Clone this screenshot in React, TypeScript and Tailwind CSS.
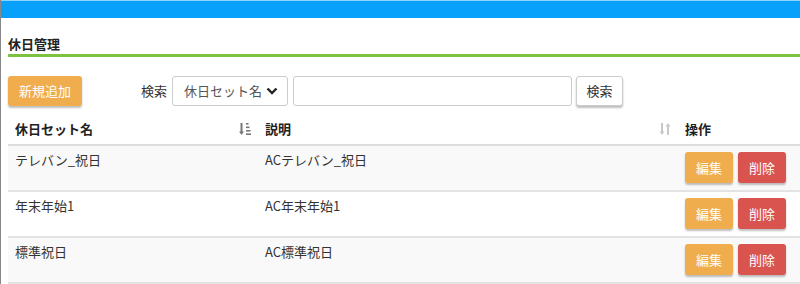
import React from "react";

const rows = [
  { name: "テレバン_祝日", desc: "ACテレバン_祝日" },
  { name: "年末年始1", desc: "AC年末年始1" },
  { name: "標準祝日", desc: "AC標準祝日" },
];

const SortDownIcon = () => (
  <svg width="12" height="14" viewBox="0 0 12 14" className="text-[#777]">
    <path d="M2.5 1v10" stroke="currentColor" strokeWidth="2" />
    <path d="M0 9.5l2.5 3.5 2.5-3.5z" fill="currentColor" />
    <rect x="7" y="1" width="2.5" height="1.6" fill="currentColor" />
    <rect x="7" y="4.5" width="3.5" height="1.6" fill="currentColor" />
    <rect x="7" y="8" width="4.5" height="1.6" fill="currentColor" />
    <rect x="7" y="11.4" width="5" height="1.6" fill="currentColor" />
  </svg>
);

const SortBothIcon = () => (
  <svg width="12" height="14" viewBox="0 0 12 14" className="text-[#c8c8c8]">
    <path d="M3 1v10" stroke="currentColor" strokeWidth="2" />
    <path d="M0.5 9.5l2.5 3.5 2.5-3.5z" fill="currentColor" />
    <path d="M9 3v10" stroke="currentColor" strokeWidth="2" />
    <path d="M6.5 4.5L9 1l2.5 3.5z" fill="currentColor" />
  </svg>
);

export default function App() {
  return (
    <div
      className="w-[800px] h-[284px] overflow-hidden bg-white text-[13px] text-[#333] border-l border-[#888]"
      style={{ fontFamily: '"Noto Sans CJK JP", "Noto Sans", sans-serif' }}
    >
      <div className="h-[18px] bg-[#07a0fb] border-t border-[#8fd2fb]" />
      <div className="pl-[7px]">
        <div className="pt-[16px] border-b-[3px] border-[#7cc242]">
          <h1 className="font-bold text-[13px] leading-[20px] text-[#222]">休日管理</h1>
        </div>

        <div className="flex items-center mt-[19px] h-[30px]">
          <button className="w-[74px] h-[30px] rounded-[3px] bg-[#f0ad4e] text-white text-[13px] shadow-[0_2px_2px_rgba(0,0,0,0.25)]">
            新規追加
          </button>
          <span className="ml-[59px] mr-[5px] text-[#333]">検索</span>
          <div className="w-[116px] h-[30px] border border-[#ccc] rounded-[3px] flex items-center pl-[11px] text-[#555] gap-[4px]">
            <span>休日セット名</span>
            <svg width="12" height="10" viewBox="0 0 12 10">
              <path d="M1.5 2.5L6 7l4.5-4.5" stroke="#222" strokeWidth="2.4" fill="none" />
            </svg>
          </div>
          <div className="ml-[5px] w-[279px] h-[30px] border border-[#ccc] rounded-[3px]" />
          <button className="ml-[4px] w-[47px] h-[30px] rounded-[3px] bg-white border border-[#ccc] shadow-[0_2px_2px_rgba(0,0,0,0.25)] text-[#333]">
            検索
          </button>
        </div>

        <table className="w-full mt-[7px] border-collapse">
          <thead>
            <tr className="h-[32px] border-b-2 border-[#ddd] font-bold text-[#222]">
              <th className="w-[250px] text-left px-[7px] font-bold">
                <div className="flex items-center justify-between">
                  <span>休日セット名</span>
                  <SortDownIcon />
                </div>
              </th>
              <th className="w-[420px] text-left pl-[7px] pr-[7px] font-bold">
                <div className="flex items-center justify-between">
                  <span>説明</span>
                  <SortBothIcon />
                </div>
              </th>
              <th className="text-left px-[7px] font-bold">操作</th>
            </tr>
          </thead>
          <tbody>
            {rows.map((r, i) => (
              <tr
                key={i}
                className={`h-[46px] border-b-2 border-[#e3e3e3] ${i % 2 === 0 ? "bg-[#f9f9f9]" : "bg-white"}`}
              >
                <td className="align-top pt-[4px] px-[7px]">{r.name}</td>
                <td className="align-top pt-[4px] px-[7px]">{r.desc}</td>
                <td className="align-top pt-[6px] px-[7px]">
                  <div className="flex gap-[5px]">
                    <button className="w-[48px] h-[31px] rounded-[3px] bg-[#f0ad4e] text-white shadow-[0_2px_2px_rgba(0,0,0,0.25)]">
                      編集
                    </button>
                    <button className="w-[48px] h-[31px] rounded-[3px] bg-[#d9534f] text-white shadow-[0_2px_2px_rgba(0,0,0,0.25)]">
                      削除
                    </button>
                  </div>
                </td>
              </tr>
            ))}
          </tbody>
        </table>
      </div>
    </div>
  );
}
